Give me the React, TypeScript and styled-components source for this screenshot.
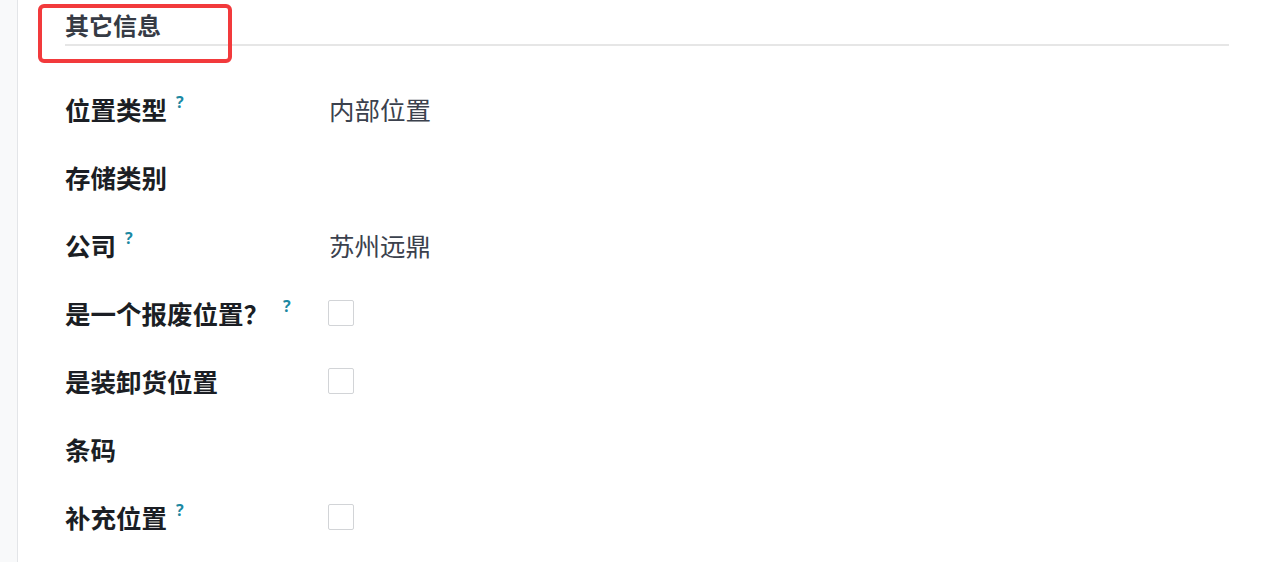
import React from "react";
import styled, { createGlobalStyle } from "styled-components";

const Global = createGlobalStyle`
  html, body { margin: 0; padding: 0; background: #ffffff; }
  body { font-family: "Noto Sans CJK SC", "Noto Sans", sans-serif; }
`;

const Page = styled.div`
  display: flex;
  width: 1268px;
  height: 562px;
  overflow: hidden;
  background: #ffffff;
`;

const Sidebar = styled.div`
  width: 17px;
  flex: none;
  background: #f8f9fa;
  border-right: 1px solid #e3e5e8;
`;

const Main = styled.div`
  flex: 1;
  padding: 0 39px 0 47px;
`;

const HeadingWrap = styled.div`
  position: relative;
  padding-top: 8px;
  border-bottom: 2px solid #e6e6e6;
`;

const Heading = styled.h2`
  margin: 0;
  font-size: 24px;
  line-height: 34px;
  font-weight: 700;
  color: #363b45;
  padding-bottom: 2px;
`;

const Highlight = styled.div`
  position: absolute;
  left: -27px;
  top: 4px;
  width: 194px;
  height: 59px;
  box-sizing: border-box;
  border: 4px solid #f23a3c;
  border-radius: 6px;
  pointer-events: none;
`;

const Rows = styled.div`
  padding-top: 29px;
`;

const Row = styled.div`
  display: grid;
  grid-template-columns: 263px 1fr;
  align-items: center;
  height: 68px;
`;

const Label = styled.div`
  display: flex;
  align-items: flex-start;
  font-size: 25.5px;
  line-height: 34px;
  font-weight: 700;
  color: #1b1e24;
`;

const Help = styled.sup<{ $gap: number }>`
  font-size: 16px;
  line-height: 16px;
  font-weight: 700;
  color: #1c88a2;
  margin-left: ${(p) => p.$gap}px;
  margin-top: 2px;
  font-family: "Noto Sans", sans-serif;
`;

const Value = styled.div`
  font-size: 25.5px;
  line-height: 34px;
  color: #3b414d;
  padding-left: 1px;
`;

const Checkbox = styled.div`
  width: 26px;
  height: 26px;
  box-sizing: border-box;
  border: 1px solid #d2d4d7;
  border-radius: 2px;
  background: #fff;
`;

type Field = {
  label: string;
  help?: number;
  value?: string;
  check?: boolean;
};

const fields: Field[] = [
  { label: "位置类型", help: 9, value: "内部位置" },
  { label: "存储类别" },
  { label: "公司", help: 9, value: "苏州远鼎" },
  { label: "是一个报废位置？", help: 14, check: true },
  { label: "是装卸货位置", check: true },
  { label: "条码" },
  { label: "补充位置", help: 9, check: true },
];

export default function App() {
  return (
    <>
      <Global />
      <Page>
        <Sidebar />
        <Main>
          <HeadingWrap>
            <Heading>其它信息</Heading>
            <Highlight />
          </HeadingWrap>
          <Rows>
            {fields.map((f) => (
              <Row key={f.label}>
                <Label>
                  {f.label}
                  {f.help !== undefined && <Help $gap={f.help}>?</Help>}
                </Label>
                <div>
                  {f.value && <Value>{f.value}</Value>}
                  {f.check && <Checkbox />}
                </div>
              </Row>
            ))}
          </Rows>
        </Main>
      </Page>
    </>
  );
}
